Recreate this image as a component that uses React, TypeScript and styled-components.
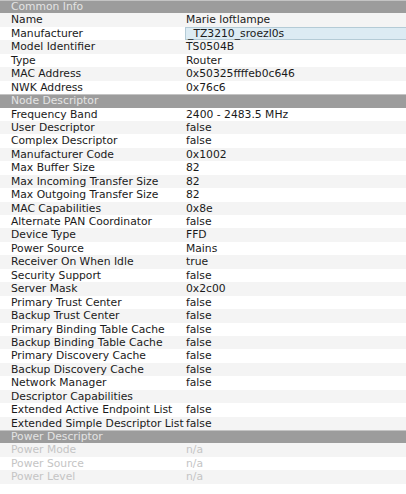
import React from "react";
import styled, { createGlobalStyle } from "styled-components";

const GlobalStyle = createGlobalStyle`
  html, body {
    margin: 0;
    padding: 0;
    background: #ffffff;
  }
  body {
    font-family: "DejaVu Sans", "Liberation Sans", sans-serif;
    font-size: 10.75px;
  }
`;

// whole property table
const Table = styled.div`
  width: 406px;
  display: flex;
  flex-direction: column;
`;

// grey band that starts a group
const SectionHeader = styled.div`
  height: 13.44px;
  box-sizing: border-box;
  border-top: 1px solid #c4c4c4;
  background: #9c9c9c;
  color: #e4e4e4;
  padding-left: 11px;
  line-height: 12px;
  white-space: nowrap;
`;

const Row = styled.div<{ $shaded: boolean }>`
  height: 13.44px;
  display: grid;
  grid-template-columns: 185px 1fr;
  background: ${(p) => (p.$shaded ? "#f4f4f4" : "#ffffff")};
`;

const Label = styled.div<{ $disabled?: boolean }>`
  padding-left: 11px;
  line-height: 13.44px;
  color: ${(p) => (p.$disabled ? "#c4c4c4" : "#1a1a1a")};
  white-space: nowrap;
`;

const Value = styled.div<{ $disabled?: boolean; $editing?: boolean }>`
  box-sizing: border-box;
  line-height: ${(p) => (p.$editing ? "11.44px" : "13.44px")};
  padding-left: ${(p) => (p.$editing ? "2px" : "1px")};
  color: ${(p) => (p.$disabled ? "#c4c4c4" : "#1a1a1a")};
  white-space: nowrap;
  background: ${(p) => (p.$editing ? "#dcebf3" : "transparent")};
  border: ${(p) => (p.$editing ? "1px solid #b4cbd6" : "none")};
  border-right: none;
`;

type Item = { label: string; value: string; editing?: boolean };
type Section = { title: string; disabled?: boolean; items: Item[] };

const sections: Section[] = [
  {
    title: "Common Info",
    items: [
      { label: "Name", value: "Marie loftlampe" },
      { label: "Manufacturer", value: "_TZ3210_sroezl0s", editing: true },
      { label: "Model Identifier", value: "TS0504B" },
      { label: "Type", value: "Router" },
      { label: "MAC Address", value: "0x50325ffffeb0c646" },
      { label: "NWK Address", value: "0x76c6" },
    ],
  },
  {
    title: "Node Descriptor",
    items: [
      { label: "Frequency Band", value: "2400 - 2483.5 MHz" },
      { label: "User Descriptor", value: "false" },
      { label: "Complex Descriptor", value: "false" },
      { label: "Manufacturer Code", value: "0x1002" },
      { label: "Max Buffer Size", value: "82" },
      { label: "Max Incoming Transfer Size", value: "82" },
      { label: "Max Outgoing Transfer Size", value: "82" },
      { label: "MAC Capabilities", value: "0x8e" },
      { label: "Alternate PAN Coordinator", value: "false" },
      { label: "Device Type", value: "FFD" },
      { label: "Power Source", value: "Mains" },
      { label: "Receiver On When Idle", value: "true" },
      { label: "Security Support", value: "false" },
      { label: "Server Mask", value: "0x2c00" },
      { label: "Primary Trust Center", value: "false" },
      { label: "Backup Trust Center", value: "false" },
      { label: "Primary Binding Table Cache", value: "false" },
      { label: "Backup Binding Table Cache", value: "false" },
      { label: "Primary Discovery Cache", value: "false" },
      { label: "Backup Discovery Cache", value: "false" },
      { label: "Network Manager", value: "false" },
      { label: "Descriptor Capabilities", value: "" },
      { label: "Extended Active Endpoint List", value: "false" },
      { label: "Extended Simple Descriptor List", value: "false" },
    ],
  },
  {
    title: "Power Descriptor",
    disabled: true,
    items: [
      { label: "Power Mode", value: "n/a" },
      { label: "Power Source", value: "n/a" },
      { label: "Power Level", value: "n/a" },
    ],
  },
];

export default function App() {
  // rows alternate shading across the whole table, headers included
  let line = 0;
  return (
    <>
      <GlobalStyle />
      <Table>
        {sections.map((s) => {
          line++;
          return (
            <React.Fragment key={s.title}>
              <SectionHeader>{s.title}</SectionHeader>
              {s.items.map((it) => {
                const shaded = line % 2 === 1;
                line++;
                return (
                  <Row key={it.label} $shaded={shaded}>
                    <Label $disabled={s.disabled}>{it.label}</Label>
                    <Value $disabled={s.disabled} $editing={it.editing}>
                      {it.value}
                    </Value>
                  </Row>
                );
              })}
            </React.Fragment>
          );
        })}
      </Table>
    </>
  );
}
